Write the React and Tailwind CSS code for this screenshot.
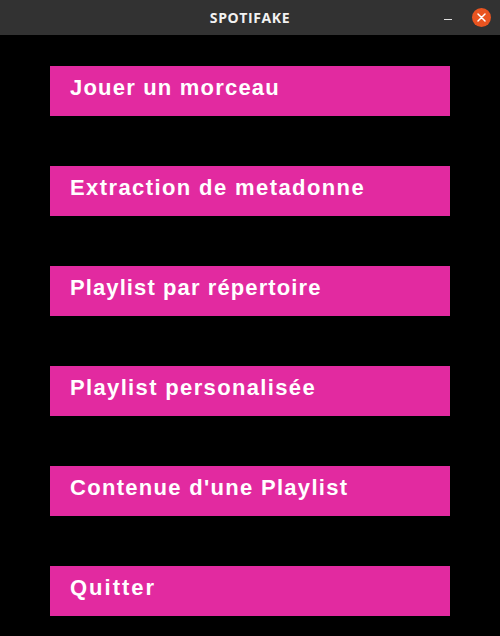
const items = [
  ['Jouer un morceau', 'tracking-[1.2px]'],
  ['Extraction de metadonne', 'tracking-[1.4px]'],
  ['Playlist par répertoire', 'tracking-[1.1px]'],
  ['Playlist personalisée', 'tracking-[1.35px]'],
  ["Contenue d'une Playlist", 'tracking-[1.3px]'],
  ['Quitter', 'tracking-[2px]'],
]

export default function App() {
  return (
    <div className="w-[500px] h-[636px] bg-black flex flex-col overflow-hidden">
      <div className="h-[35px] bg-[#323232] flex items-center relative shrink-0">
        <div className="w-full text-center text-[14px] font-bold text-[#f2f2f2] tracking-[0.6px]" style={{ fontFamily: '"Open Sans", "Liberation Sans", sans-serif' }}>
          SPOTIFAKE
        </div>
        <div className="absolute right-[48px] top-[19px] w-[8px] h-[1px] bg-[#e0e0e0]" />
        <div className="absolute right-[9px] top-[8px] w-[19px] h-[19px] rounded-full bg-[#e95420] flex items-center justify-center">
          <svg width="9" height="9" viewBox="0 0 9 9">
            <path d="M1 1 L8 8 M8 1 L1 8" stroke="#fff" strokeWidth="1.5" strokeLinecap="round" />
          </svg>
        </div>
      </div>
      <div className="flex flex-col gap-[50px] px-[50px] pt-[31px]">
        {items.map(([t, tr]) => (
          <div key={t} className="h-[50px] bg-[#e22aa0] flex items-start px-[20px] pt-[11px]">
            <span className={'text-white font-bold text-[22px] leading-none ' + tr} style={{ fontFamily: '"Liberation Sans", Arial, sans-serif' }}>
              {t}
            </span>
          </div>
        ))}
      </div>
    </div>
  )
}
